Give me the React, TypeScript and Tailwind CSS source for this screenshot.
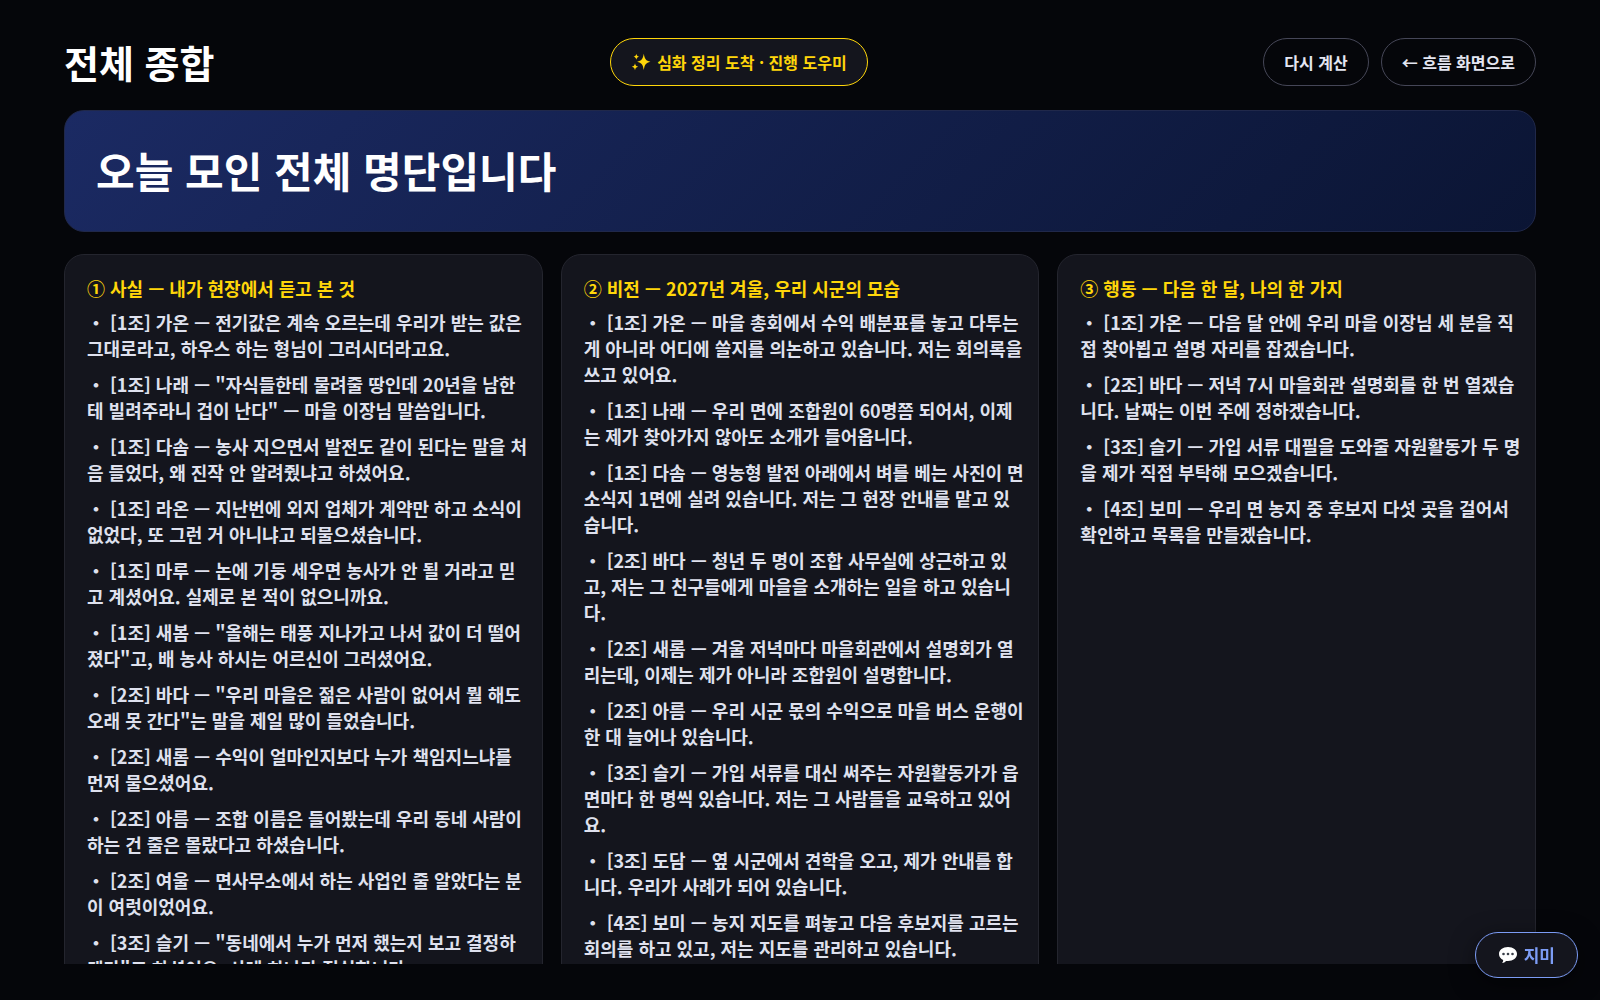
import { useState } from "react";

// ─── Types ───────────────────────────────────────────────────────────────────

interface Entry {
  group: string;
  name: string;
  text: string;
}

interface Section {
  title: string;
  entries: Entry[];
}

// ─── Data ────────────────────────────────────────────────────────────────────

const SECTIONS: Section[] = [
  {
    title: "① 사실 — 내가 현장에서 듣고 본 것",
    entries: [
      { group: "1조", name: "가온", text: "전기값은 계속 오르는데 우리가 받는 값은 그대로라고, 하우스 하는 형님이 그러시더라고요." },
      { group: "1조", name: "나래", text: '"자식들한테 물려줄 땅인데 20년을 남한테 빌려주라니 겁이 난다" — 마을 이장님 말씀입니다.' },
      { group: "1조", name: "다솜", text: "농사 지으면서 발전도 같이 된다는 말을 처음 들었다, 왜 진작 안 알려줬냐고 하셨어요." },
      { group: "1조", name: "라온", text: "지난번에 외지 업체가 계약만 하고 소식이 없었다, 또 그런 거 아니냐고 되물으셨습니다." },
      { group: "1조", name: "마루", text: "논에 기둥 세우면 농사가 안 될 거라고 믿고 계셨어요. 실제로 본 적이 없으니까요." },
      { group: "1조", name: "새봄", text: '"올해는 태풍 지나가고 나서 값이 더 떨어졌다"고, 배 농사 하시는 어르신이 그러셨어요.' },
      { group: "2조", name: "바다", text: '"우리 마을은 젊은 사람이 없어서 뭘 해도 오래 못 간다"는 말을 제일 많이 들었습니다.' },
      { group: "2조", name: "새롬", text: "수익이 얼마인지보다 누가 책임지느냐를 먼저 물으셨어요." },
      { group: "2조", name: "아름", text: "조합 이름은 들어봤는데 우리 동네 사람이 하는 건 줄은 몰랐다고 하셨습니다." },
      { group: "2조", name: "여울", text: "면사무소에서 하는 사업인 줄 알았다는 분이 여럿이었어요." },
      { group: "3조", name: "슬기", text: '"동네에서 누가 먼저 했는지 보고 결정하겠다"고 하셨어요. 사례 하나가 절실합니다.' },
    ],
  },
  {
    title: "② 비전 — 2027년 겨울, 우리 시군의 모습",
    entries: [
      { group: "1조", name: "가온", text: "마을 총회에서 수익 배분표를 놓고 다투는 게 아니라 어디에 쓸지를 의논하고 있습니다. 저는 회의록을 쓰고 있어요." },
      { group: "1조", name: "나래", text: "우리 면에 조합원이 60명쯤 되어서, 이제는 제가 찾아가지 않아도 소개가 들어옵니다." },
      { group: "1조", name: "다솜", text: "영농형 발전 아래에서 벼를 베는 사진이 면 소식지 1면에 실려 있습니다. 저는 그 현장 안내를 맡고 있습니다." },
      { group: "2조", name: "바다", text: "청년 두 명이 조합 사무실에 상근하고 있고, 저는 그 친구들에게 마을을 소개하는 일을 하고 있습니다." },
      { group: "2조", name: "새롬", text: "겨울 저녁마다 마을회관에서 설명회가 열리는데, 이제는 제가 아니라 조합원이 설명합니다." },
      { group: "2조", name: "아름", text: "우리 시군 몫의 수익으로 마을 버스 운행이 한 대 늘어나 있습니다." },
      { group: "3조", name: "슬기", text: "가입 서류를 대신 써주는 자원활동가가 읍면마다 한 명씩 있습니다. 저는 그 사람들을 교육하고 있어요." },
      { group: "3조", name: "도담", text: "옆 시군에서 견학을 오고, 제가 안내를 합니다. 우리가 사례가 되어 있습니다." },
      { group: "4조", name: "보미", text: "농지 지도를 펴놓고 다음 후보지를 고르는 회의를 하고 있고, 저는 지도를 관리하고 있습니다." },
    ],
  },
  {
    title: "③ 행동 — 다음 한 달, 나의 한 가지",
    entries: [
      { group: "1조", name: "가온", text: "다음 달 안에 우리 마을 이장님 세 분을 직접 찾아뵙고 설명 자리를 잡겠습니다." },
      { group: "2조", name: "바다", text: "저녁 7시 마을회관 설명회를 한 번 열겠습니다. 날짜는 이번 주에 정하겠습니다." },
      { group: "3조", name: "슬기", text: "가입 서류 대필을 도와줄 자원활동가 두 명을 제가 직접 부탁해 모으겠습니다." },
      { group: "4조", name: "보미", text: "우리 면 농지 중 후보지 다섯 곳을 걸어서 확인하고 목록을 만들겠습니다." },
    ],
  },
];

// ─── Icons ───────────────────────────────────────────────────────────────────

const SparklesIcon = () => (
  <svg width="20" height="20" viewBox="0 0 18 18" fill="currentColor" aria-hidden="true">
    <path d="M11.500 1.500c.8 4.800 1.800 6.200 6 7.200-4.200 1-5.200 2.400-6 7.600-.8-5.200-1.800-6.600-6-7.600 4.200-1 5.200-2.400 6-7.200z" />
    <path d="M4.800 1.600c.4 1.800.9 2.300 2.500 2.700-1.600.4-2.100.9-2.500 2.700-.4-1.800-.9-2.300-2.500-2.700 1.600-.4 2.100-.9 2.500-2.700z" />
    <path d="M3.600 10.200c.5 2.100 1 2.700 2.900 3.100-1.900.4-2.400 1-2.900 3.100-.5-2.100-1-2.700-2.900-3.100 1.900-.4 2.400-1 2.900-3.100z" />
  </svg>
);

const SpeechIcon = () => (
  <svg width="20" height="18" viewBox="0 0 20 18" aria-hidden="true">
    <path
      d="M10 1c5.200 0 9 3 9 7s-3.800 7-9 7c-.7 0-1.300 0-1.900-.1C7 16 5.700 16.800 4.200 17c.7-.9 1-1.900 1-2.900C2.600 12.900 1 10.700 1 8c0-4 3.800-7 9-7z"
      fill="#ffffff"
    />
    <circle cx="5.500" cy="8" r="1.300" fill="#3a3f4a" />
    <circle cx="10" cy="8" r="1.300" fill="#3a3f4a" />
    <circle cx="14.500" cy="8" r="1.300" fill="#3a3f4a" />
  </svg>
);

// ─── Column card ─────────────────────────────────────────────────────────────

const SectionCard = ({ title, entries }: Section) => (
  <section className="rounded-[20px] border border-[#24252e] bg-[#14151d] py-5 pl-[22px] pr-3 text-lg leading-[26px]">
    <h3 className="font-bold text-[#ffd60a]">{title}</h3>
    <ul className="mt-2 flex flex-col gap-2.5">
      {entries.map((entry) => (
        <li key={`${entry.group}-${entry.name}`} className="font-bold text-[#dfe1ee]">
          {`・ [${entry.group}] ${entry.name} — ${entry.text}`}
        </li>
      ))}
    </ul>
  </section>
);

// ─── Page ────────────────────────────────────────────────────────────────────

export default function App() {
  const [sections, setSections] = useState(SECTIONS);

  return (
    <div
      lang="ko"
      className="flex h-screen flex-col gap-[22px] overflow-hidden bg-[#05060a] px-16 py-9 font-['Noto_Sans_CJK_KR',sans-serif] text-white"
    >
      <header className="flex items-center justify-between">
        <h1 className="text-[38px] font-bold leading-[52px]">전체 종합</h1>

        <button className="flex h-12 items-center gap-1.5 rounded-full border border-[#ffd60a] bg-[#14151d] px-5 text-base font-bold text-[#ffd60a]">
          <SparklesIcon />
          심화 정리 도착 · 진행 도우미
        </button>

        <div className="flex gap-3">
          <button
            onClick={() => setSections([...SECTIONS])}
            className="h-12 rounded-full border border-[#454657] px-5 text-base font-bold text-[#e4e6f2]"
          >
            다시 계산
          </button>
          <button className="h-12 rounded-full border border-[#454657] px-5 text-base font-bold text-[#e4e6f2]">
            ← 흐름 화면으로
          </button>
        </div>
      </header>

      <div className="rounded-[20px] border border-[#20284a] bg-linear-135 from-[#1b2a63] to-[#0b1534] px-[31px] pb-[31px] pt-[29px]">
        <h2 className="text-[42px] font-bold leading-[60px]">오늘 모인 전체 명단입니다</h2>
      </div>

      {/* Long lists are cut off at the bottom of the stage */}
      <main className="grid min-h-0 flex-1 auto-rows-max grid-cols-3 gap-[18px] overflow-hidden">
        {sections.map((section) => (
          <SectionCard key={section.title} {...section} />
        ))}
      </main>

      {/* Chat button floating over the page */}
      <button className="fixed bottom-[22px] right-[22px] flex h-[46px] items-center gap-1.5 rounded-full border border-[#7c9cf5] bg-[#14151d] px-[22px] text-[17px] font-bold text-[#7c9cf5] shadow-[0_6px_24px_rgba(0,0,0,0.5)]">
        <SpeechIcon />
        지미
      </button>
    </div>
  );
}
